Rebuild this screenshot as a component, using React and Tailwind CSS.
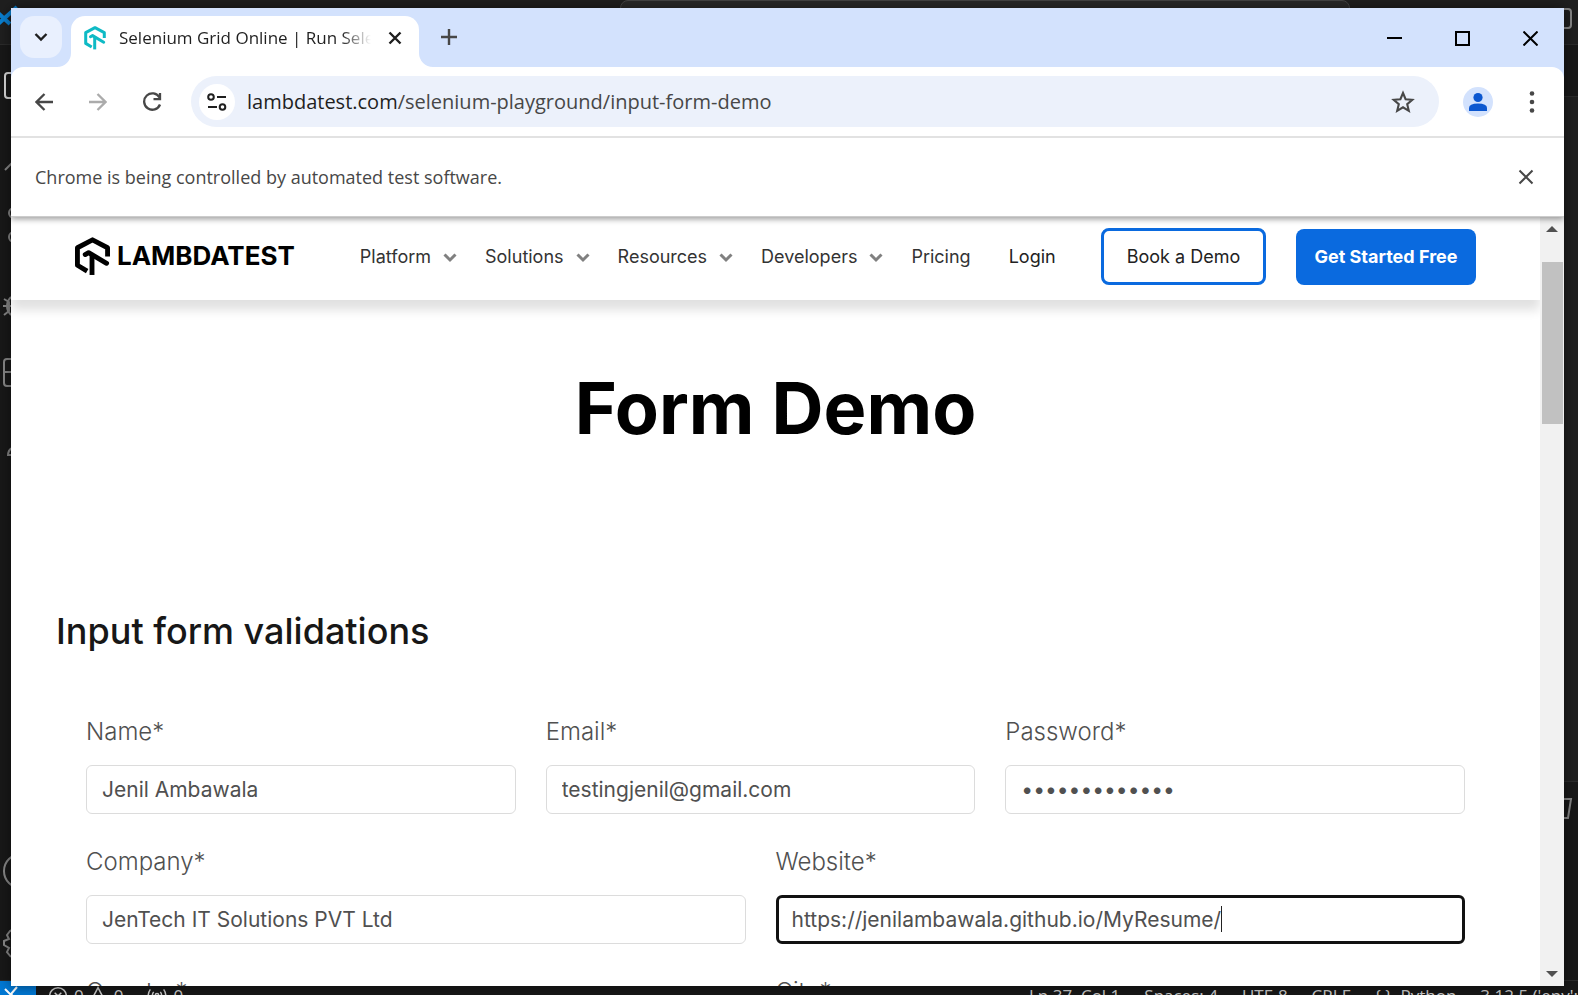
import React from "react";

function Hex({ className }) {
  return (
    <svg viewBox="0 0 36 40" className={className} fill="none" stroke="currentColor" strokeWidth="5" strokeLinejoin="round" aria-hidden="true">
      <path d="M33.500 20V11L18 2.800L2.500 11V29L12.500 35" />
      <path d="M10.500 18L14 16L32.500 27" strokeLinecap="round" />
      <path d="M17.500 18V39" />
    </svg>
  );
}

function Icon({ className, children, box = "0 0 24 24", width = 2 }) {
  return (
    <svg viewBox={box} className={className} fill="none" stroke="currentColor" strokeWidth={width} aria-hidden="true">
      {children}
    </svg>
  );
}

function Editor() {
  return (
    <div className="flex h-[calc(100vh+18px)] flex-col bg-[#1f1f1f] text-[#868686]">
      <div className="flex h-[45px] shrink-0 items-start border-b border-[#2b2b2b] bg-[#1f1f1f]">
        <Icon className="mt-[4px] h-[24px] w-[24px] text-[#0a7fd0]" width={4}>
          <path d="M-2 9L10 20M-2 20L17 3" />
        </Icon>
        <div className="grow-3" />
        <div className="h-[34px] w-[730px] rounded-lg border border-[#454545] bg-[#2a2a2a]" />
        <div className="grow" />
        <div className="mt-[8px] mr-[6px] h-[21px] w-[24px] rounded-sm border-2 border-[#868686]" />
      </div>
      <div className="flex min-h-0 grow justify-between">
        <div className="w-[60px] bg-[#181818]">
          <Icon className="h-[936px] w-[60px]" box="0 45 60 936">
            <path d="M30 73H8Q5 73 5 76V95Q5 98 8 98H30" stroke="#d7d7d7" />
            <path d="M5 170L13 162" />
            <circle cx="14" cy="213" r="5" />
            <circle cx="14" cy="237" r="5" />
            <path d="M3 306H11M4 299L9 302V311L4 315M11 297Q7 301 7 306T11 315" />
            <path d="M30 359H7Q4 359 4 362V383Q4 386 7 386H30M4 372H30" />
            <path d="M8 456Q8 450 12 448M8 455H12" />
            <circle cx="21" cy="871" r="17" />
            <path d="M14 929L10 931L7 935L9 939L4 941V945L9 948L7 952L11 957" />
          </Icon>
        </div>
        <div className="flex w-[30px] flex-col bg-[#1f1f1f]">
          <div className="h-[52px] border-b border-[#2b2b2b] bg-[#181818]" />
          <div className="grow" />
          <div className="h-[199px] border-t border-[#2b2b2b] bg-[#181818]">
            <Icon className="h-[40px] w-[30px]" box="1548 782 30 40">
              <path d="M1560 799H1571L1568 818H1560" />
            </Icon>
          </div>
        </div>
      </div>
      <div className="flex h-[33px] shrink-0 items-center justify-between overflow-hidden border-t border-[#2b2b2b] bg-[#181818] pb-[3px] text-[17px] leading-[24px] text-[#cccccc]">
        <div className="flex h-full items-center">
          <div className="flex h-full w-[36px] items-center bg-[#0078d4] text-white">
            <Icon className="h-[34px] w-[24px]" box="0 981 24 34">
              <path d="M5 991L11 997L5 1003M17 989L11 996L17 1003" />
            </Icon>
          </div>
          <div className="flex items-center gap-1 pl-3">
            <Icon className="h-[20px] w-[20px]" width={1.8}><circle cx="12" cy="12" r="10" /><path d="M8 8L16 16M16 8L8 16" /></Icon>
            <span className="pl-[2px]">0</span>
            <Icon className="h-[20px] w-[20px]" width={1.8}><path d="M12 2L22 21H2Z" /></Icon>
            <span className="pl-[2px]">0</span>
            <Icon className="ml-5 h-[20px] w-[20px]" width={1.8}><path d="M4 4Q-1 11 4 18M20 4Q25 11 20 18M8 7Q5 11 8 15M16 7Q19 11 16 15M12 14V22" /><circle cx="12" cy="11" r="2" /></Icon>
            <span className="pl-[2px]">0</span>
          </div>
        </div>
        <div className="flex items-center gap-6 whitespace-nowrap">
          <span>Ln 37, Col 1</span>
          <span>Spaces: 4</span>
          <span>UTF-8</span>
          <span>CRLF</span>
          <span>{"{ }"}&nbsp; Python</span>
          <span>3.12.5 ('env':</span>
        </div>
      </div>
    </div>
  );
}

function TabStrip() {
  return (
    <div className="flex h-[59px] shrink-0 items-end justify-between bg-[#d3e2fd]">
      <div className="flex items-end">
        <button aria-label="Search tabs" className="mr-[-5px] mb-[9px] ml-[9px] flex h-[42px] w-[42px] items-center justify-center rounded-[14px] bg-[#e9f0fe] text-[#1f1f1f]">
          <Icon className="h-[14px] w-[14px]" box="0 0 14 14" width={2.4}><path d="M1.500 4L7 9.500L12.500 4" /></Icon>
        </button>
        <svg viewBox="0 0 14 14" className="h-[14px] w-[14px] text-white" aria-hidden="true"><path d="M14 0V14H0A14 14 0 0 0 14 0Z" fill="currentColor" /></svg>
        <div className="flex h-[51px] w-[348px] items-center rounded-t-[14px] bg-white pb-[7px] pl-[13px]">
          <Hex className="h-[24px] w-[22px] text-[#0ebac5]" />
          <div className="ml-[13px] w-[252px] overflow-hidden bg-linear-to-r from-[#1f1f1f] from-88% to-transparent bg-clip-text text-[17px] whitespace-nowrap text-transparent">Selenium Grid Online | Run Selenium</div>
          <button aria-label="Close tab" className="ml-[17px] text-[#1f1f1f]">
            <Icon className="h-[14px] w-[14px]" box="0 0 14 14" width={2.4}><path d="M1.500 1.500L12.500 12.500M12.500 1.500L1.500 12.500" /></Icon>
          </button>
        </div>
        <svg viewBox="0 0 14 14" className="h-[14px] w-[14px] text-white" aria-hidden="true"><path d="M0 0V14H14A14 14 0 0 1 0 0Z" fill="currentColor" /></svg>
        <button aria-label="New tab" className="mb-[22px] ml-[8px] text-[#474747]">
          <Icon className="h-[16px] w-[16px]" box="0 0 16 16" width={2.4}><path d="M8 0V16M0 8H16" /></Icon>
        </button>
      </div>
      <div className="mb-[21px] flex gap-[53px] pr-[26px] text-black">
        <button aria-label="Minimize"><Icon className="h-[15px] w-[15px]" box="0 0 15 15"><path d="M0 7H15" /></Icon></button>
        <button aria-label="Maximize"><Icon className="h-[15px] w-[15px]" box="0 0 15 15"><path d="M1 1H14V14H1Z" /></Icon></button>
        <button aria-label="Close"><Icon className="h-[15px] w-[15px]" box="0 0 15 15"><path d="M0.500 0.500L14.500 14.500M14.500 0.500L0.500 14.500" /></Icon></button>
      </div>
    </div>
  );
}

function Toolbar() {
  return (
    <div className="relative z-10 shrink-0 bg-[#d3e2fd]">
      <div className="flex h-[71px] items-center rounded-t-[12px] border-b-2 border-[#e2e2e2] bg-white text-[#474747]">
        <button aria-label="Back" className="ml-[24px]"><Icon className="h-[18px] w-[18px]" box="0 0 18 18" width={2.3}><path d="M18 9H1.500M9.500 1L1.500 9L9.500 17" /></Icon></button>
        <button aria-label="Forward" className="ml-[36px] text-[#ababab]"><Icon className="h-[18px] w-[18px]" box="0 0 18 18" width={2.3}><path d="M0 9H16.500M8.500 1L16.500 9L8.500 17" /></Icon></button>
        <button aria-label="Reload" className="ml-[35px]"><Icon className="h-[20px] w-[20px]" box="0 0 20 20" width={2.3}><path d="M17.500 5.500A8.200 8.200 0 1 0 18 12.500M18 1V7.200H11.500" /></Icon></button>
        <div className="ml-[29px] flex h-[51px] grow items-center rounded-full bg-[#ecf1fb] pr-[24px] pl-[8px]">
          <button aria-label="View site information" className="flex h-[36px] w-[36px] items-center justify-center rounded-full bg-white text-[#1f1f1f]">
            <Icon className="h-[18px] w-[20px]" box="0 0 20 18"><circle cx="4" cy="4" r="2.800" /><path d="M10 4H19M1 14H10" /><circle cx="15.500" cy="14" r="2.800" /></Icon>
          </button>
          <div className="grow pl-[12px] text-[20px] text-[#474747]"><span className="text-[#1f1f1f]">lambdatest.com</span>/selenium-playground/input-form-demo</div>
          <button aria-label="Bookmark this tab"><Icon className="h-[24px] w-[24px]" box="0 0 24 24" width={2.1}><path d="M12 3L14.600 9.200L21.300 9.800L16.200 14.200L17.800 20.800L12 17.300L6.200 20.800L7.800 14.200L2.700 9.800L9.400 9.200Z" /></Icon></button>
        </div>
        <button aria-label="Profile" className="ml-[24px]">
          <svg viewBox="0 0 30 30" className="h-[30px] w-[30px]" aria-hidden="true"><circle cx="15" cy="15" r="15" fill="#d3e2fd" /><circle cx="15" cy="10.500" r="4.600" fill="#0b57d0" /><path d="M6 24V21Q6 16.500 15 16.500T24 21V24Z" fill="#0b57d0" /></svg>
        </button>
        <button aria-label="Menu" className="mr-[22px] ml-[29px]">
          <svg viewBox="0 0 20 24" className="h-[24px] w-[20px]" fill="currentColor" aria-hidden="true"><circle cx="10" cy="3.500" r="2.300" /><circle cx="10" cy="12" r="2.300" /><circle cx="10" cy="20.500" r="2.300" /></svg>
        </button>
      </div>
    </div>
  );
}

function NavItem({ label }) {
  return (
    <a href="#" className="flex items-center gap-3">
      {label}
      <Icon className="h-[14px] w-[14px] text-[#808080]" box="0 0 14 14" width={3}><path d="M1.500 4.500L7 10L12.500 4.500" /></Icon>
    </a>
  );
}

function SiteHeader() {
  return (
    <header className="flex h-[83px] shrink-0 items-center bg-white pb-[4px] pl-[64px] text-[18px] text-[#333] shadow-[0_10px_10px_rgba(0,0,0,0.12)]">
      <a href="#" className="flex items-center gap-[7px] pb-px text-black">
        <Hex className="h-[39px] w-[35px]" />
        <span className="text-[26px] leading-[32px] font-bold">LAMBDATEST</span>
      </a>
      <nav className="ml-[65px] flex items-center gap-[28px]">
        <NavItem label="Platform" />
        <NavItem label="Solutions" />
        <NavItem label="Resources" />
        <NavItem label="Developers" />
        <a href="#">Pricing</a>
        <a href="#" className="ml-[10px] text-[#222]">Login</a>
      </nav>
      <button className="mr-[30px] ml-auto h-[57px] w-[165px] rounded-lg border-3 border-[#0a6adf] text-[#222]">Book a Demo</button>
      <button className="mr-[64px] h-[56px] w-[180px] rounded-lg bg-[#0a6adf] font-bold text-white">Get Started Free</button>
    </header>
  );
}

function Field({ id, label, value, type = "text", last, focused }) {
  return (
    <div className={last ? "" : "pr-[30px]"}>
      <label htmlFor={id} className="block text-[24px] leading-[32px] font-light">{label}</label>
      <div className="mt-[17px]">
        {focused ? (
          <div className="relative">
            <input id={id} type={type} defaultValue={value} className="h-[49px] w-full rounded-md border-3 border-[#111] px-[13px] text-[21px]" />
            <span className="absolute top-[11px] left-[445px] h-[26px] w-px bg-[#222]" />
          </div>
        ) : (
          <input id={id} type={type} defaultValue={value} className="h-[49px] w-full rounded-md border border-[#dcdcdc] px-[15px] text-[21px]" />
        )}
      </div>
    </div>
  );
}

function Page() {
  return (
    <div className="flex min-h-0 grow font-[Inter,sans-serif]">
      <div className="flex min-w-0 grow flex-col overflow-hidden">
        <SiteHeader />
        <main>
          <h1 className="mt-[63px] text-center text-[72px] leading-[90px] font-bold text-black">Form Demo</h1>
          <h2 className="mt-[154px] ml-[45px] text-[36px] leading-[48px] font-medium text-[#171717]">Input form validations</h2>
          <form className="mx-[75px] mt-[61px] flex flex-col gap-8 text-[#505050]">
            <div className="grid grid-cols-3">
              <Field id="name" label="Name*" value="Jenil Ambawala" />
              <Field id="email" label="Email*" value="testingjenil@gmail.com" />
              <Field id="password" label="Password*" value="testpassword1" type="password" last />
            </div>
            <div className="grid grid-cols-2">
              <Field id="company" label="Company*" value="JenTech IT Solutions PVT Ltd" />
              <Field id="website" label="Website*" value="https://jenilambawala.github.io/MyResume/" last focused />
            </div>
            <div className="grid grid-cols-2">
              <Field id="country" label="Country*" value="" />
              <Field id="city" label="City*" value="" last />
            </div>
          </form>
        </main>
      </div>
      <div className="flex w-[24px] shrink-0 flex-col items-center bg-[#f1f1f1] text-[#505050]">
        <svg viewBox="0 0 12 6" className="mt-[9px] h-[6px] w-[12px]" fill="currentColor" aria-hidden="true"><path d="M6 0L12 6H0Z" /></svg>
        <div className="mt-[30px] h-[162px] w-[21px] bg-[#c1c1c1]" />
        <svg viewBox="0 0 12 6" className="mt-auto mb-[9px] h-[6px] w-[12px]" fill="currentColor" aria-hidden="true"><path d="M0 0H12L6 6Z" /></svg>
      </div>
    </div>
  );
}

export default function App() {
  return (
    <div className="relative h-screen overflow-hidden bg-[#181818] font-['Open_Sans',sans-serif]">
      <Editor />
      <div className="absolute top-[8px] right-[14px] bottom-[9px] left-[11px] flex flex-col overflow-hidden bg-white shadow-[0_0_12px_rgba(0,0,0,0.5)]">
        <TabStrip />
        <Toolbar />
        <div className="relative flex h-[79px] shrink-0 items-center justify-between border-b border-[#ccc] bg-white pr-[30px] pl-[24px] text-[18px] text-[#474747] shadow-[0_2px_6px_rgba(0,0,0,0.4)]">
          <span>Chrome is being controlled by automated test software.</span>
          <button aria-label="Dismiss"><Icon className="h-[16px] w-[16px]" box="0 0 16 16"><path d="M1.500 1.500L14.500 14.500M14.500 1.500L1.500 14.500" /></Icon></button>
        </div>
        <Page />
      </div>
    </div>
  );
}
